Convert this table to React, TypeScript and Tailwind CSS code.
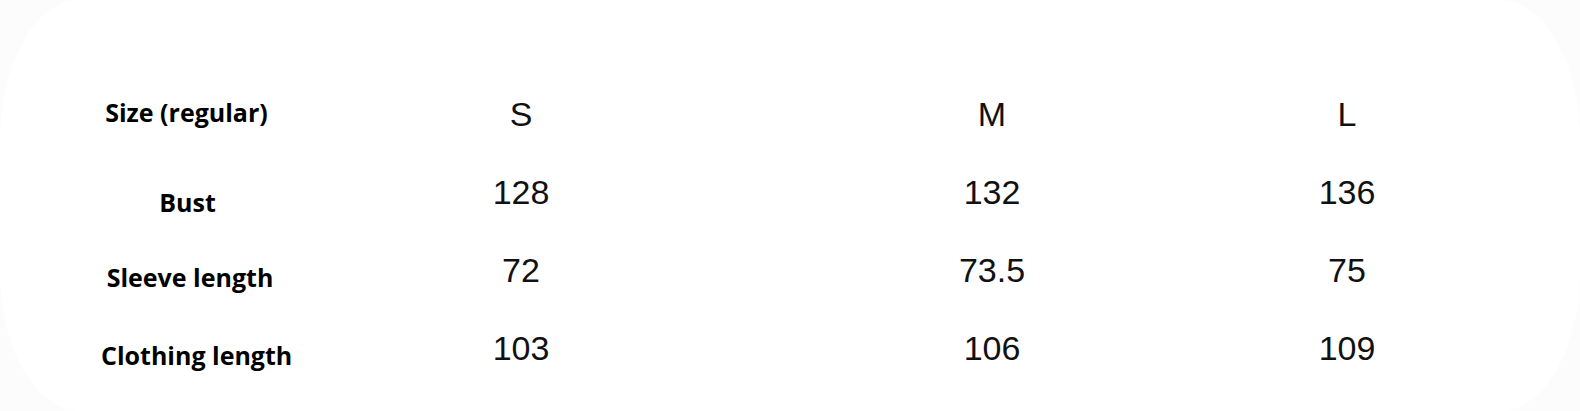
const rows = [
  { label: 'Size (regular)', labelPad: 'pt-[25px] pr-[7px]', values: ['S', 'M', 'L'] },
  { label: 'Bust', labelPad: 'pt-[37px] pr-[5px]', values: ['128', '132', '136'] },
  { label: 'Sleeve length', labelPad: 'pt-[34px]', values: ['72', '73.5', '75'] },
  { label: 'Clothing length', labelPad: 'pt-[34px] pl-[11px]', values: ['103', '106', '109'] },
];

export default function App() {
  return (
    <div className="w-[1580px] h-[411px] overflow-hidden bg-[#fcfcfc]">
      <div className="h-full w-full bg-white rounded-[80px/140px] pt-[75px]">
        {rows.map((row) => (
          <div key={row.label} className="flex h-[78px]">
            {/* label column */}
            <div className={`ml-[90px] w-[200px] text-center leading-none text-[25px] font-bold text-black font-['Open_Sans',sans-serif] whitespace-nowrap ${row.labelPad}`}>
              {row.label}
            </div>
            {/* size columns */}
            <div className="ml-[131px] w-[200px] text-center text-[34px] leading-[78px] text-[#111] font-['Liberation_Sans',Arial,sans-serif]">
              {row.values[0]}
            </div>
            <div className="ml-[271px] w-[200px] text-center text-[34px] leading-[78px] text-[#111] font-['Liberation_Sans',Arial,sans-serif]">
              {row.values[1]}
            </div>
            <div className="ml-[155px] w-[200px] text-center text-[34px] leading-[78px] text-[#111] font-['Liberation_Sans',Arial,sans-serif]">
              {row.values[2]}
            </div>
          </div>
        ))}
      </div>
    </div>
  );
}
